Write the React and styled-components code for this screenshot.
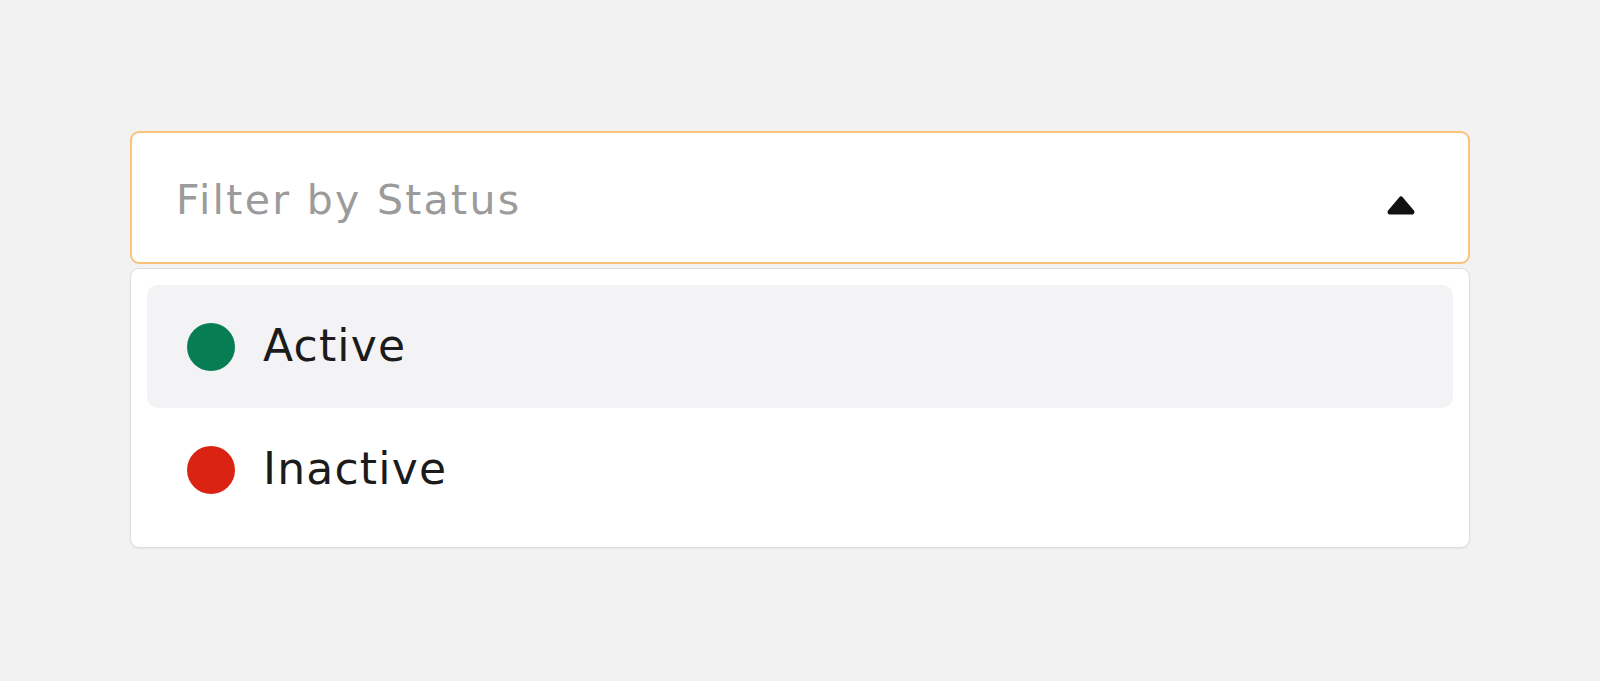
import React, { useState } from "react";
import styled, { createGlobalStyle } from "styled-components";

const GlobalStyle = createGlobalStyle`
	html, body {
		margin: 0;
		padding: 0;
		background: #f2f2f2;
	}
	body {
		font-family: "DejaVu Sans", "Open Sans", Arial, sans-serif;
	}
`;

const options = [
	{ value: "active", label: "Active", color: "#067d52" },
	{ value: "inactive", label: "Inactive", color: "#da2313" }
];

const Page = styled.div`
	min-height: 681px;
	padding: 131px 130px 0;
	box-sizing: border-box;
`;

const SelectContainer = styled.div`
	width: 100%;
	display: flex;
	flex-direction: column;
	gap: 4px;
`;

const Trigger = styled.button`
	display: flex;
	align-items: center;
	justify-content: space-between;
	height: 133px;
	padding: 0 51px 0 44px;
	background: #fff;
	border: 2px solid #fbc27a;
	border-radius: 9px;
	box-sizing: border-box;
	cursor: pointer;
	font-family: inherit;
`;

const Placeholder = styled.span`
	font-size: 41px;
	color: #9b9b9b;
	letter-spacing: 2.3px;
	margin-top: 5px;
`;

const Arrow = styled.svg`
	width: 32px;
	height: 22px;
	margin-top: 14px;
	transform: ${props => (props.open ? "none" : "rotate(180deg)")};
`;

const Menu = styled.ul`
	list-style: none;
	margin: 0;
	padding: 16px;
	background: #fff;
	border: 1.5px solid #dedede;
	border-radius: 9px;
	box-shadow: 0 1px 2px rgba(0, 0, 0, 0.05);
	display: flex;
	flex-direction: column;
`;

const Option = styled.li`
	display: flex;
	align-items: center;
	gap: 28px;
	height: 123px;
	padding: 0 40px;
	border-radius: 11px;
	background: ${props => (props.highlighted ? "#f3f3f5" : "transparent")};
	cursor: pointer;
`;

const Dot = styled.span`
	width: 48px;
	height: 48px;
	border-radius: 50%;
	background: ${props => props.color};
	flex-shrink: 0;
`;

const Label = styled.span`
	font-size: 44px;
	color: #1b1b1b;
	letter-spacing: 1.2px;
	margin-top: -3px;
`;

export default function App() {
	const [open, setOpen] = useState(true);
	const [hovered, setHovered] = useState("active");

	return (
		<Page>
			<GlobalStyle />
			<SelectContainer>
				<Trigger onClick={() => setOpen(!open)}>
					<Placeholder>Filter by Status</Placeholder>
					<Arrow open={open} viewBox="0 0 32 22">
						<polygon
							points="5,18 16,5 27,18"
							fill="#111"
							stroke="#111"
							strokeWidth="5"
							strokeLinejoin="round"
						/>
					</Arrow>
				</Trigger>
				{open && (
					<Menu>
						{options.map(opt => (
							<Option
								key={opt.value}
								highlighted={hovered === opt.value}
								onMouseEnter={() => setHovered(opt.value)}
							>
								<Dot color={opt.color} />
								<Label>{opt.label}</Label>
							</Option>
						))}
					</Menu>
				)}
			</SelectContainer>
		</Page>
	);
}
